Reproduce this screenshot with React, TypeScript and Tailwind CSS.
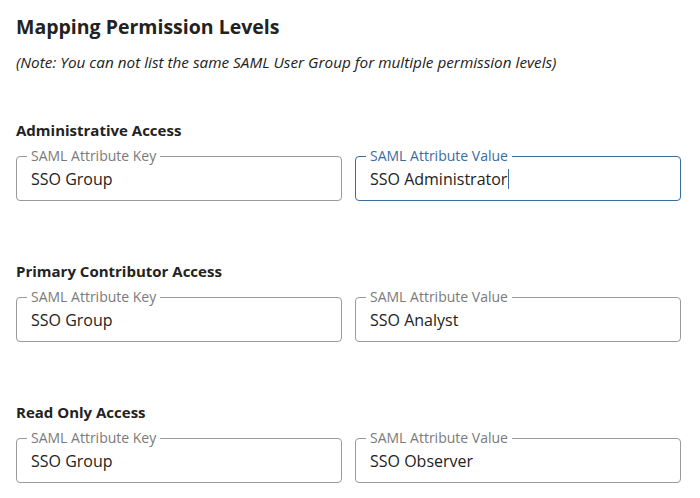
import React from "react";

function Field({ label, value, focused }: { label: string; value: string; focused?: boolean }) {
  return (
    <fieldset
      className={`flex-1 rounded-[4px] border pl-[14px] pr-3 pt-[5px] pb-[10px] ${
        focused ? "border-[#3b6c9e]" : "border-[#9a9a9a]"
      }`}
    >
      <legend
        className={`ml-[-4px] px-[4px] text-[14px] leading-[14px] ${
          focused ? "text-[#3b6c9e]" : "text-[#7a7a7a]"
        }`}
      >
        {label}
      </legend>
      <div className="text-[16px] leading-[22px] text-[#222] flex items-center">
        {value}
        {focused && <span className="inline-block w-px h-[20px] bg-[#3b6c9e] ml-px" />}
      </div>
    </fieldset>
  );
}

function Section({ title, value, focused, first }: { title: string; value: string; focused?: boolean; first?: boolean }) {
  return (
    <div className={first ? "mt-[48px]" : "mt-[60px]"}>
      <div className="text-[15px] leading-[20px] font-bold text-[#222]">{title}</div>
      <div className="mt-[9px] flex gap-[13px]">
        <Field label="SAML Attribute Key" value="SSO Group" />
        <Field label="SAML Attribute Value" value={value} focused={focused} />
      </div>
    </div>
  );
}

export default function App() {
  return (
    <div className="w-[700px] h-[498px] bg-white pl-4 pr-[19px] pt-[13px]" style={{ fontFamily: '"Open Sans", sans-serif' }}>
      <div className="text-[19.5px] leading-[28px] font-bold text-[#222]">Mapping Permission Levels</div>
      <div className="mt-[11px] text-[15.3px] leading-[20px] italic text-[#222]">
        (Note: You can not list the same SAML User Group for multiple permission levels)
      </div>
      <Section first title="Administrative Access" value="SSO Administrator" focused />
      <Section title="Primary Contributor Access" value="SSO Analyst" />
      <Section title="Read Only Access" value="SSO Observer" />
    </div>
  );
}
